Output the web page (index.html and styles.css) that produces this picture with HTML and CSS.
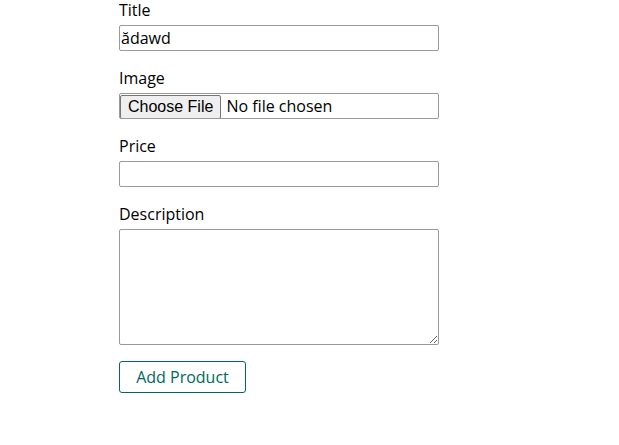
FILE: index.html
```html
<!DOCTYPE html>
<html>
<head>
<meta charset="utf-8">
<link rel="stylesheet" href="styles.css">
</head>
<body>
<main class="page">
  <form class="product-form">
    <div class="form-control">
      <label class="label" for="title">Title</label>
      <input class="field" type="text" id="title" value="ădawd">
    </div>
    <div class="form-control">
      <label class="label" for="image">Image</label>
      <input class="field file-field" type="file" id="image">
    </div>
    <div class="form-control">
      <label class="label" for="price">Price</label>
      <input class="field" type="text" id="price">
    </div>
    <div class="form-control">
      <label class="label" for="description">Description</label>
      <textarea class="field area" id="description"></textarea>
    </div>
    <button class="btn" type="button">Add Product</button>
  </form>
</main>
</body>
</html>
```

FILE: styles.css
```css
html, body {
  margin: 0;
  padding: 0;
  background: #fff;
}
body {
  font-family: "Open Sans", sans-serif;
  color: #000;
}
.page {
  padding-left: 119px;
  margin-top: -1px;
}
.product-form {
  width: 320px;
  display: flex;
  flex-direction: column;
  align-items: flex-start;
}
.form-control {
  width: 100%;
  margin-bottom: 16px;
}
.label {
  display: block;
  font-size: 16px;
  line-height: 22px;
  height: 22px;
  margin-bottom: 4px;
}
.field {
  display: block;
  box-sizing: border-box;
  width: 320px;
  height: 26px;
  margin: 0;
  border: 1px solid #999;
  border-radius: 2px;
  font-family: "Open Sans", sans-serif;
  font-size: 16px;
  padding: 0 1px;
  background: #fff;
  color: #000;
  outline: none;
}
.file-field {
  padding: 0;
  line-height: 24px;
}
.file-field::file-selector-button {
  font-family: "Liberation Sans", Arial, sans-serif;
  font-size: 16px;
  height: 24px;
  margin: 0 5px 0 0;
  padding: 0 7px;
  background: #efefef;
  border: 1px solid #767676;
  border-radius: 2px;
  color: #000;
}
.area {
  height: 116px;
  resize: vertical;
}
.btn {
  font-family: "Open Sans", sans-serif;
  font-size: 16px;
  color: #00695c;
  background: #fff;
  border: 1px solid #00695c;
  border-radius: 3px;
  width: 127px;
  height: 32px;
  padding: 0;
  cursor: pointer;
}
```
